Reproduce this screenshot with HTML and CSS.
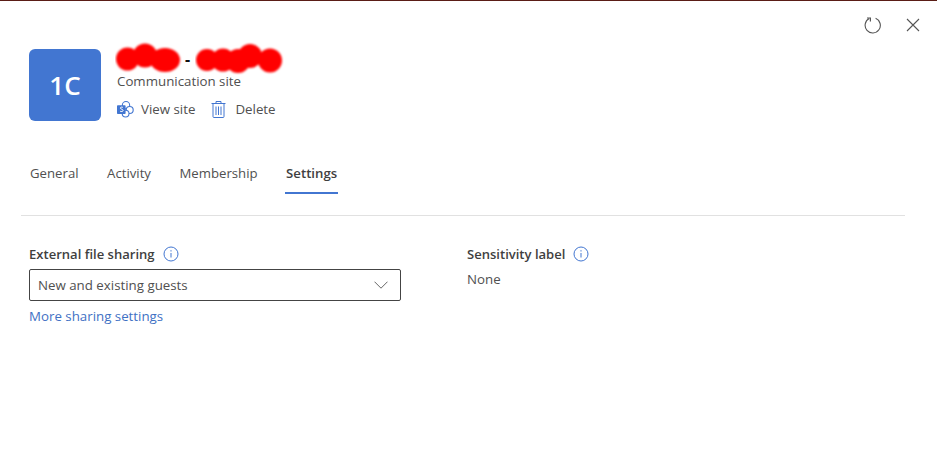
FILE: index.html
```html
<!DOCTYPE html>
<html lang="en">
<head>
<meta charset="utf-8">
<title>Site settings</title>
<link rel="stylesheet" href="styles.css">
</head>
<body>
<div class="panel">
  <div class="toolbar">
    <button class="tool" aria-label="Refresh">
      <svg width="18" height="18" viewBox="0 0 18 18" fill="none" stroke="#555" stroke-width="1.1"><path d="M11.6 2.300A7.600 7.600 0 1 1 5.200 2.600"/><path d="M5 6V2.400H1.600" transform="translate(1.400 -.4)" stroke-width="1.200"/></svg>
    </button>
    <button class="tool" aria-label="Close">
      <svg width="14" height="14" viewBox="0 0 14 14" fill="none" stroke="#555" stroke-width="1.1"><path d="M1 1l12 12M13 1L1 13"/></svg>
    </button>
  </div>
  <header class="head">
    <div class="tile">1C</div>
    <div class="head-body">
      <div class="title">
        <svg class="scribble first" width="67" height="36" viewBox="0 0 67 36" aria-hidden="true"><defs><filter id="soft"><feGaussianBlur stdDeviation="1"/></filter></defs><g fill="#f00" filter="url(#soft)"><circle cx="12.500" cy="19" r="11.500"/><circle cx="30" cy="15.500" r="12"/><ellipse cx="50" cy="20" rx="15" ry="12"/></g></svg>
        <span class="dash">-</span>
        <svg class="scribble" width="90" height="36" viewBox="0 0 90 36" aria-hidden="true"><g fill="#f00" filter="url(#soft)"><circle cx="12" cy="20" r="11"/><circle cx="28" cy="20" r="11.500"/><circle cx="43" cy="21" r="12"/><circle cx="55" cy="16" r="12"/><ellipse cx="75" cy="20.500" rx="12" ry="12"/></g></svg>
      </div>
      <div class="subtitle">Communication site</div>
      <div class="actions">
        <a class="action">
          <svg width="17" height="18" viewBox="0 0 17 18" fill="none"><circle cx="9" cy="5.200" r="3.700" fill="#fff" stroke="#4276d1" stroke-width="1.100"/><circle cx="12.700" cy="10" r="3.500" fill="#fff" stroke="#4276d1" stroke-width="1.100"/><circle cx="8.600" cy="13.600" r="3.400" fill="#fff" stroke="#4276d1" stroke-width="1.100"/><rect x="0" y="5.200" width="8.600" height="8.800" rx=".8" fill="#4276d1"/><path d="M6 7.500c-.6-.5-2.600-.7-2.600.6 0 1.300 2.700 1 2.700 2.400 0 1.300-2.300 1.200-3.100.6" stroke="#fff" stroke-width="1"/></svg>
          <span>View site</span>
        </a>
        <a class="action">
          <svg width="17" height="18" viewBox="0 0 17 18" fill="none" stroke="#4276d1" stroke-width="1"><path d="M.5 3.500h14M5 3.500V1.500h5v2M2 3.500V16.500a1 1 0 0 0 1 1h9a1 1 0 0 0 1-1V3.500M5 6.500v8.500M7.500 6.500v8.500M10 6.500v8.500"/></svg>
          <span>Delete</span>
        </a>
      </div>
    </div>
  </header>
  <nav class="tabs">
    <a class="tab">General</a>
    <a class="tab">Activity</a>
    <a class="tab">Membership</a>
    <a class="tab active">Settings</a>
  </nav>
  <main class="fields">
    <section class="col-left">
      <div class="label">External file sharing
        <svg class="info" width="16" height="16" viewBox="0 0 16 16" fill="none" stroke="#4276d1"><circle cx="8" cy="8" r="7"/><path d="M8 7v4.500M8 4.200v1.300"/></svg>
      </div>
      <div class="select">
        <span>New and existing guests</span>
        <svg width="14" height="8" viewBox="0 0 14 8" fill="none" stroke="#666"><path d="M.5.700 7 7.200 13.500.700"/></svg>
      </div>
      <a class="link">More sharing settings</a>
    </section>
    <section class="col-right">
      <div class="label">Sensitivity label
        <svg class="info" width="16" height="16" viewBox="0 0 16 16" fill="none" stroke="#4276d1"><circle cx="8" cy="8" r="7"/><path d="M8 7v4.500M8 4.200v1.300"/></svg>
      </div>
      <div class="value">None</div>
    </section>
  </main>
</div>
</body>
</html>
```
FILE: styles.css
```css
* { box-sizing: border-box; }
html, body { margin: 0; height: 100%; background: #fff; overflow: hidden; }
body { font-family: "Open Sans", "Noto Sans", sans-serif; font-size: 13.3px; color: #505050; }
.panel { height: 456px; border-top: 1px solid #5a1d16; padding: 14px 17px 0 21px; }
.toolbar { display: flex; justify-content: flex-end; align-items: center; gap: 24px; height: 19px; }
.tool { display: flex; padding: 0; border: 0; background: none; }
.head { display: flex; gap: 16px; margin: 15px 0 0 8px; }
.tile { width: 72px; height: 72px; border-radius: 6px; background: #4276d1; color: #fff; font-size: 26px; font-weight: 600; display: flex; align-items: center; justify-content: center; }
.head-body { display: flex; flex-direction: column; }
.title { display: flex; align-items: center; height: 24px; margin-top: -3px; color: #111; font-weight: 700; font-size: 16px; }
.scribble { flex: none; }
.first { margin-left: -2px; }
.dash { margin: 1px 5px 0 3px; }
.subtitle { margin-top: 2px; line-height: 18px; }
.actions { display: flex; gap: 16px; margin-top: 10px; }
.action { display: flex; align-items: center; gap: 7px; line-height: 18px; }
.tabs { display: flex; gap: 26.5px; margin: 41px 15px 0 0; padding: 0 0 31px 8px; border-bottom: 1px solid #e1e1e1; }
.tab { position: relative; font-size: 13.2px; line-height: 22px; padding: 0 1px; }
.tab.active { font-weight: 600; color: #3f3f3f; }
.tab.active::after { content: ""; position: absolute; left: 0; right: 0; bottom: -10px; height: 2px; background: #4276d1; }
.fields { display: flex; margin: 29px 0 0 8px; }
.col-left { width: 372px; margin-right: 66px; }
.label { display: flex; align-items: center; gap: 8px; font-size: 13.05px; font-weight: 600; line-height: 18px; height: 18px; color: #3f3f3f; }
.select { display: flex; justify-content: space-between; align-items: center; height: 32px; margin-top: 6px; padding: 0 12px 0 8px; border: 1px solid #444; border-radius: 2px; }
.link { display: block; margin-top: 6px; color: #3f71c4; line-height: 18px; }
.value { margin-top: 7px; line-height: 18px; }
```
